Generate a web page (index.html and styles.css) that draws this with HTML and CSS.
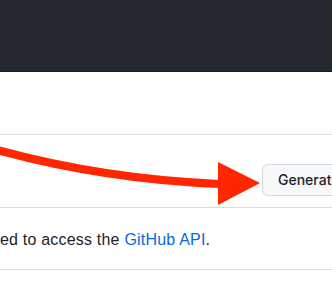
FILE: index.html
```html
<!DOCTYPE html>
<html lang="en">
<head>
    <meta charset="UTF-8">
    <meta name="viewport" content="width=device-width, initial-scale=1.0">
    <title>Personal access tokens</title>
    <link rel="stylesheet" href="styles.css">
</head>
<body>
    <header class="site-header"></header>

    <main class="page">
        <div class="token-row">
            <a href="#" class="btn">Generate new token</a>
        </div>
        <div class="note-row">
            <p>ed to access the <a href="#" class="link">GitHub API</a>.</p>
        </div>
    </main>

    <!-- annotation arrow drawn over the page -->
    <svg class="annotation" width="332" height="288" viewBox="0 0 332 288">
        <path d="M -10 148 Q 100 179 220 184" fill="none" stroke="#ff2600" stroke-width="8"/>
        <polygon points="218,162 260,183 218,205" fill="#ff2600"/>
    </svg>
</body>
</html>
```

FILE: styles.css
```css
:root {
    --header-bg: #24292f;
    --border: #d8dee4;
    --text: #1f2328;
    --link: #0969da;
    --btn-bg: #f6f8fa;
    --btn-border: #d0d7de;
}

* {
    box-sizing: border-box;
}

body {
    margin: 0;
    overflow: hidden;
    background: #fff;
    color: var(--text);
    font-family: 'Liberation Sans', Arial, sans-serif;
}

.site-header {
    height: 72px;
    background-color: var(--header-bg);
    border-bottom: 1px solid #1c2025;
}

.page {
    padding-top: 62px;
}

.token-row {
    border-top: 1px solid var(--border);
    padding: 29px 0 11px 262px;
    white-space: nowrap;
}

.btn {
    display: inline-block;
    height: 32px;
    padding: 0 15px;
    line-height: 30px;
    font-family: Inter, 'Liberation Sans', sans-serif;
    font-size: 14px;
    font-weight: 500;
    color: var(--text);
    text-decoration: none;
    background-color: var(--btn-bg);
    border: 1px solid var(--btn-border);
    border-radius: 6px;
}

.note-row {
    border-top: 1px solid var(--border);
    border-bottom: 1px solid var(--border);
    padding: 20px 0 17px;
}

.note-row p {
    margin: 0;
    font-size: 16px;
    line-height: 24px;
    letter-spacing: 0.2px;
    white-space: nowrap;
}

.link {
    color: var(--link);
    text-decoration: none;
}

.annotation {
    position: absolute;
    top: 0;
    left: 0;
    pointer-events: none;
}
```
